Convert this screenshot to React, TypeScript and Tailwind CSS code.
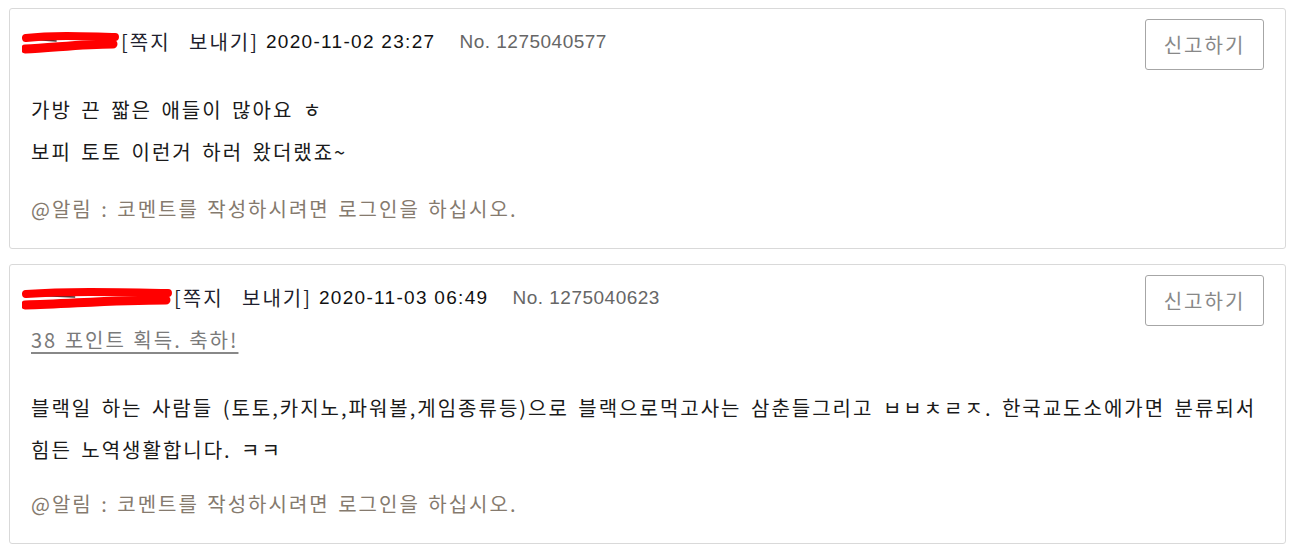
import React from 'react';

const kr = { fontFamily: '"Noto Sans CJK KR", "Noto Sans", sans-serif' };
const latin = { fontFamily: '"Liberation Sans", Arial, sans-serif' };

function Scribble({ width }: { width: number }) {
  return (
    <svg width={width} height={26} viewBox={`0 0 ${width} 26`} className="inline-block align-middle shrink-0">
      <path d={`M6 10 L${width * 0.35} 12 M${width * 0.55} 14 L${width - 10} 13`} stroke="#333" strokeWidth={1.5} />
      <path d={`M${width * 0.85} 18 l6 0 M${width * 0.9} 10 l4 0`} stroke="#222" strokeWidth={1.5} />
      <path
        d={`M4 9 C${width * 0.3} 6 ${width * 0.6} 7 ${width - 6} 8`}
        stroke="#ff0000"
        strokeWidth={8}
        strokeLinecap="round"
        fill="none"
      />
      <path
        d={`M3 20 C${width * 0.3} 19 ${width * 0.6} 15 ${width - 8} 15`}
        stroke="#ff0000"
        strokeWidth={9}
        strokeLinecap="round"
        fill="none"
      />
    </svg>
  );
}

type Comment = {
  nameWidth: number;
  date: string;
  no: string;
  point?: string;
  lines: string[];
};

const comments: Comment[] = [
  {
    nameWidth: 99,
    date: '2020-11-02 23:27',
    no: '1275040577',
    lines: ['가방 끈 짧은 애들이 많아요 ㅎ', '보피 토토 이런거 하러 왔더랬죠~'],
  },
  {
    nameWidth: 152,
    date: '2020-11-03 06:49',
    no: '1275040623',
    point: '38 포인트 획득. 축하!',
    lines: [
      '블랙일 하는 사람들 (토토,카지노,파워볼,게임종류등)으로 블랙으로먹고사는 삼춘들그리고 ㅂㅂㅊㄹㅈ. 한국교도소에가면 분류되서',
      '힘든 노역생활합니다. ㅋㅋ',
    ],
  },
];

function CommentCard({ c }: { c: Comment }) {
  return (
    <div className="bg-white border border-[#d9d9d9] rounded-[3px] pt-[10px] pb-[18px] pr-[21px]">
      <div className="flex items-start">
        <div className="flex-1 pl-[12px]">
          <div className="mt-[2px] h-[42px] flex items-center whitespace-nowrap">
            <Scribble width={c.nameWidth} />
            <span className="text-[20px] tracking-[2px] [word-spacing:12px] text-[#1f1f2e]" style={kr}>
              [쪽지 보내기]
            </span>
            <span className="ml-[7px] text-[19px] tracking-[1.3px] text-[#111]" style={latin}>
              {c.date}
            </span>
            <span className="ml-[24px] text-[19px] tracking-[0.5px] text-[#666]" style={latin}>
              No. {c.no}
            </span>
          </div>
          {c.point && (
            <div className="pl-[9px] h-[42px] flex items-center">
              <a className="text-[20px] tracking-[2px] [word-spacing:1px] text-[#7a7a7a] underline underline-offset-[4px] decoration-[#888]" style={kr}>
                {c.point}
              </a>
            </div>
          )}
        </div>
        <button
          className="w-[119px] h-[51px] border border-[#a6a6a6] rounded-[3px] text-[20px] tracking-[2px] text-[#888] bg-white"
          style={kr}
        >
          신고하기
        </button>
      </div>
      <div
        className={`pl-[21px] text-[20px] tracking-[2px] [word-spacing:3px] text-[#1a1a1a] leading-[42px] ${c.point ? 'mt-[26px]' : 'mt-[19px]'}`}
        style={kr}
      >
        {c.lines.map((l, i) => (
          <div key={i} className="whitespace-nowrap">{l}</div>
        ))}
      </div>
      <div
        className={`pl-[21px] text-[20px] tracking-[2px] [word-spacing:2px] text-[#857a6e] leading-[42px] ${c.point ? 'mt-[12px]' : 'mt-[15px]'}`}
        style={kr}
      >
        @알림 : 코멘트를 작성하시려면 로그인을 하십시오.
      </div>
    </div>
  );
}

export default function App() {
  return (
    <div className="min-h-screen bg-white pt-[8px] pl-[9px] pr-[16px] flex flex-col gap-[15px]">
      {comments.map((c, i) => (
        <CommentCard key={i} c={c} />
      ))}
    </div>
  );
}
